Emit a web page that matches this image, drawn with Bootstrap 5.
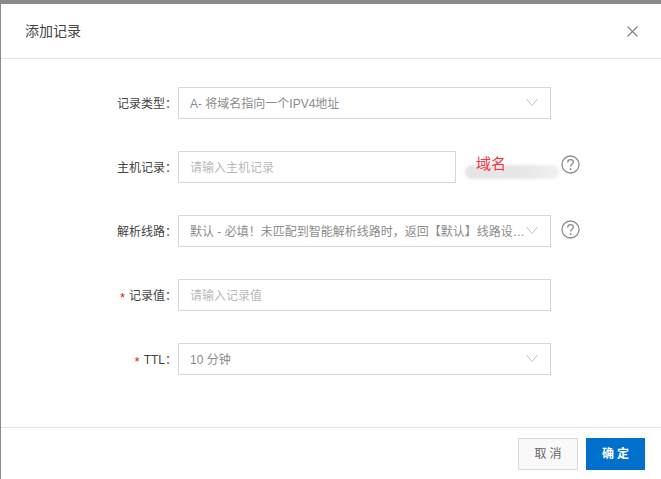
<!DOCTYPE html>
<html lang="zh-CN">
<head>
<meta charset="utf-8">
<title>添加记录</title>
<link href="https://cdn.jsdelivr.net/npm/bootstrap@5.3.0/dist/css/bootstrap.min.css" rel="stylesheet">
<style>
html,body{height:479px;overflow:hidden}
body{background:#8a8a8a;padding:4px 0 0 1px;font-family:"Liberation Sans","Noto Sans CJK SC",sans-serif;font-size:12px;color:#333}
.dlg{background:#fff;height:475px;display:flex;flex-direction:column}
.dlg-head{height:55px;padding:0 23px 0 24px;border-bottom:1px solid #e6e6e6;flex:none}
.dlg-title{font-size:14px;color:#444;margin:0;font-weight:400;line-height:1}
.dlg-body{flex:1;padding-top:28px;display:flex;flex-direction:column;gap:32px}
.dlg-foot{height:52px;flex:none;border-top:1px solid #e6e6e6;padding:10px 16px 0 0;gap:8px}
.fld{height:32px;gap:1px}
.fld-label{width:176px;flex:none;text-align:right;color:#444;font-size:12px;white-space:nowrap;padding-top:1px}
.req{color:#d0281e;margin-right:4px;font-size:13px;line-height:0;vertical-align:-2px}
.fld-box{width:373px;height:32px;flex:none;border:1px solid #d7d7d7;border-radius:0;padding:1px 22px 0 11px;font-size:12px;line-height:29px;color:#8c8c8c;background-image:none;box-shadow:none;position:relative}
.fld-pick{padding-top:2px}
.fld-input{padding-right:11px;color:#333}
.fld-input::placeholder{color:#bababa;opacity:1}
.fld-short{width:278px}
.chev{position:absolute;right:12px;top:10px;display:block}
.host-hint{position:relative;width:103px;height:32px;flex:none;margin-left:-1px}
.smudge{position:absolute;left:9px;right:0;top:14px;height:14px;background:linear-gradient(90deg,#e4e4e4 0,#e6e6e6 55%,#f0f0f0 100%);border-radius:7px;filter:blur(1.500px)}
.hint-word{position:absolute;left:20px;top:3px;color:#f5323c;font-size:15px;line-height:20px}
.help{flex:none;display:block}
.help-gap{margin-left:9px;margin-top:-4px}
.help-after{margin-left:1px;margin-top:-6px}
.btn-x{background:none;border:0;padding:0;line-height:0}
.btn-cancel,.btn-ok{height:32px;padding:0;border-radius:0;font-size:12px;letter-spacing:3px;text-indent:3px}
.btn-cancel{width:60px;background:#f9f9f9;border:1px solid #d9d9d9;color:#666}
.btn-ok{width:59px;background:#0070cc;border:1px solid #0070cc;color:#fff;font-weight:700}
</style>
</head>
<body>
<div class="dlg">
  <div class="dlg-head d-flex align-items-center justify-content-between">
    <h5 class="dlg-title">添加记录</h5>
    <button class="btn-x" type="button" aria-label="关闭">
      <svg width="11" height="11" viewBox="0 0 11 11"><path d="M.5.5l10 10M10.500.5l-10 10" stroke="#808080" stroke-width="1.100" fill="none"/></svg>
    </button>
  </div>
  <form class="dlg-body">
    <div class="fld d-flex align-items-center">
      <label class="fld-label">记录类型&#xFF1A;</label>
      <div class="fld-box fld-pick form-select text-truncate">A- 将域名指向一个IPV4地址<svg class="chev" width="12" height="9" viewBox="0 0 12 9"><path d="M.5 1l5.500 6.500L11.500 1" stroke="#c4c4c4" fill="none"/></svg></div>
    </div>
    <div class="fld d-flex align-items-center">
      <label class="fld-label">主机记录&#xFF1A;</label>
      <input class="fld-box fld-short fld-input form-control" type="text" placeholder="请输入主机记录">
      <div class="host-hint"><div class="smudge"></div><span class="hint-word">域名</span></div>
      <svg class="help help-after" width="19" height="19" viewBox="0 0 19 19"><circle cx="9.500" cy="9.500" r="8.500" stroke="#8c8c8c" stroke-width="1.300" fill="none"/><path d="M6.700 7.500c0-1.700 1.200-2.800 2.900-2.800s2.800 1 2.800 2.400c0 2.200-2.800 2.200-2.800 4.500" stroke="#8c8c8c" stroke-width="1.300" fill="none"/><circle cx="9.600" cy="14" r=".9" fill="#8c8c8c"/></svg>
    </div>
    <div class="fld d-flex align-items-center">
      <label class="fld-label">解析线路&#xFF1A;</label>
      <div class="fld-box fld-pick form-select text-truncate">默认 - 必填&#xFF01;未匹配到智能解析线路时&#xFF0C;返回【默认】线路设置结果<svg class="chev" width="12" height="9" viewBox="0 0 12 9"><path d="M.5 1l5.500 6.500L11.500 1" stroke="#c4c4c4" fill="none"/></svg></div>
      <svg class="help help-gap" width="19" height="19" viewBox="0 0 19 19"><circle cx="9.500" cy="9.500" r="8.500" stroke="#8c8c8c" stroke-width="1.300" fill="none"/><path d="M6.700 7.500c0-1.700 1.200-2.800 2.900-2.800s2.800 1 2.800 2.400c0 2.200-2.800 2.200-2.800 4.500" stroke="#8c8c8c" stroke-width="1.300" fill="none"/><circle cx="9.600" cy="14" r=".9" fill="#8c8c8c"/></svg>
    </div>
    <div class="fld d-flex align-items-center">
      <label class="fld-label"><span class="req">*</span>记录值&#xFF1A;</label>
      <input class="fld-box fld-input form-control" type="text" placeholder="请输入记录值">
    </div>
    <div class="fld d-flex align-items-center">
      <label class="fld-label"><span class="req">*</span>TTL&#xFF1A;</label>
      <div class="fld-box fld-pick form-select text-truncate">10 分钟<svg class="chev" width="12" height="9" viewBox="0 0 12 9"><path d="M.5 1l5.500 6.500L11.500 1" stroke="#c4c4c4" fill="none"/></svg></div>
    </div>
  </form>
  <div class="dlg-foot d-flex justify-content-end align-items-start">
    <button class="btn btn-cancel" type="button">取消</button>
    <button class="btn btn-ok" type="button">确定</button>
  </div>
</div>
<script src="https://cdn.jsdelivr.net/npm/bootstrap@5.3.0/dist/js/bootstrap.bundle.min.js"></script>
</body>
</html>
